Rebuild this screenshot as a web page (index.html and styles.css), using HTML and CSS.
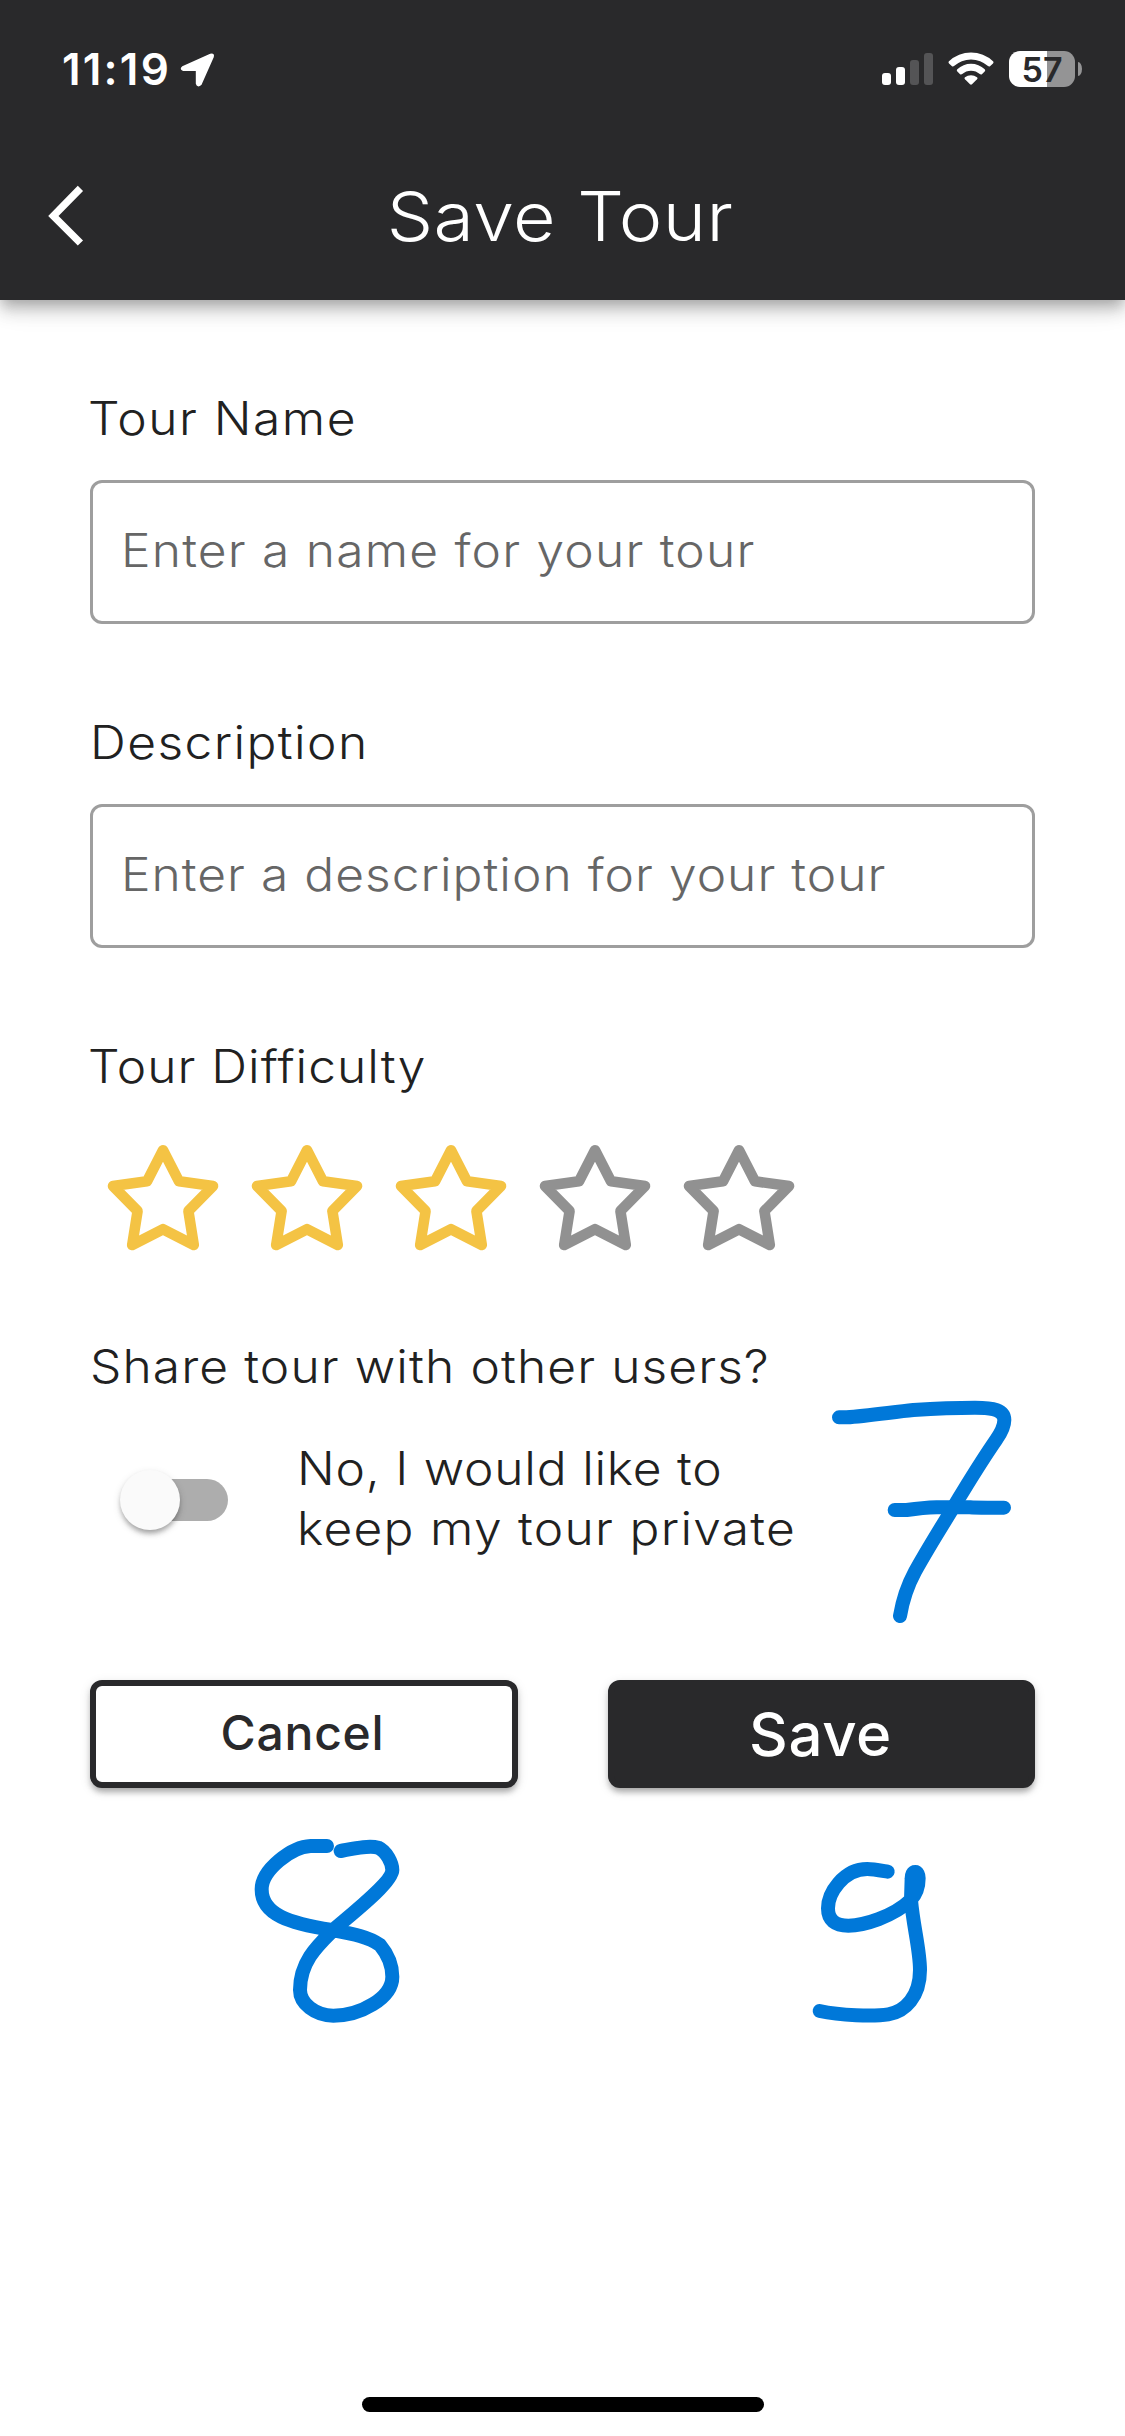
FILE: index.html
```html
<!DOCTYPE html>
<html lang="en">
<head>
<meta charset="utf-8">
<title>Save Tour</title>
<link rel="stylesheet" href="styles.css">
</head>
<body>
<div class="screen">
  <header class="header">
    <div class="status">
      <span class="time">11:19</span>
      <svg class="location" width="36" height="36" viewBox="0 0 36 36"><path d="M2.6 15 L30.5 2.6 Q34 1.6 33 5 L20.8 32.4 Q17.5 35.2 16.6 31.5 V18.3 H3.3 Q.2 17.2 2.6 15Z" fill="#fff" stroke="#fff" stroke-width="1.6" stroke-linejoin="round"/></svg>
      <div class="indicators">
        <div class="signal"><i class="bar b1"></i><i class="bar b2"></i><i class="bar b3 dim"></i><i class="bar b4 dim"></i></div>
        <svg class="wifi" width="46" height="33" viewBox="0 0 46 33" fill="#fff"><path d="M1 9.2 A32 32 0 0 1 45 9.2 Q46 10.3 45 11.4 L42 14.2 Q41 15 40 14.1 A25 25 0 0 0 6 14.1 Q5 15 4 14.2 L1 11.4 Q0 10.3 1 9.2Z"/><path d="M9.3 17.2 A20 20 0 0 1 36.7 17.2 Q37.8 18.3 36.7 19.4 L33.9 22.2 Q32.9 23 31.8 22.1 A13 13 0 0 0 14.2 22.1 Q13.1 23 12.1 22.2 L9.3 19.4 Q8.2 18.3 9.3 17.2Z"/><path d="M17 25.3 A9.5 9.5 0 0 1 29 25.3 Q30 26.2 29 27.2 L24 32.2 Q23 33.1 22 32.2 L17 27.2 Q16 26.2 17 25.3Z"/></svg>
        <div class="battery">57</div>
        <i class="nub"></i>
      </div>
    </div>
    <div class="titlebar">
      <svg class="back" width="36" height="62" viewBox="0 0 36 62"><path d="M32.4 3.4 L5.4 31 L32.4 58" fill="none" stroke="#fff" stroke-width="7.4"/></svg>
      <h1 class="title">Save Tour</h1>
    </div>
  </header>

  <main class="form">
    <label class="label"><span class="text t-name">Tour Name</span></label>
    <div class="field"><span class="text p-name">Enter a name for your tour</span></div>

    <label class="label next"><span class="text t-desc">Description</span></label>
    <div class="field"><span class="text p-desc">Enter a description for your tour</span></div>

    <label class="label next"><span class="text t-diff">Tour Difficulty</span></label>
    <div class="stars">
      <svg class="star on" viewBox="0 0 144 144"><path d="M72 22.2 L88 53.3 L122 58 L97.4 83 L102.8 117 L72 101.2 L41.2 117 L46.6 83 L22 58 L56 53.3Z"/></svg>
      <svg class="star on" viewBox="0 0 144 144"><path d="M72 22.2 L88 53.3 L122 58 L97.4 83 L102.8 117 L72 101.2 L41.2 117 L46.6 83 L22 58 L56 53.3Z"/></svg>
      <svg class="star on" viewBox="0 0 144 144"><path d="M72 22.2 L88 53.3 L122 58 L97.4 83 L102.8 117 L72 101.2 L41.2 117 L46.6 83 L22 58 L56 53.3Z"/></svg>
      <svg class="star" viewBox="0 0 144 144"><path d="M72 22.2 L88 53.3 L122 58 L97.4 83 L102.8 117 L72 101.2 L41.2 117 L46.6 83 L22 58 L56 53.3Z"/></svg>
      <svg class="star" viewBox="0 0 144 144"><path d="M72 22.2 L88 53.3 L122 58 L97.4 83 L102.8 117 L72 101.2 L41.2 117 L46.6 83 L22 58 L56 53.3Z"/></svg>
    </div>

    <label class="label share"><span class="text t-share">Share tour with other users?</span></label>
    <div class="privacy">
      <div class="switch"><i class="thumb"></i></div>
      <p class="choice"><span class="text c1">No, I would like to</span><span class="text c2">keep my tour private</span></p>
    </div>

    <div class="actions">
      <button class="btn cancel">Cancel</button>
      <button class="btn save">Save</button>
    </div>
  </main>

  <div class="home"></div>

  <!-- Pen marks drawn over the form -->
  <svg class="ink" viewBox="0 0 1125 2436">
    <g transform="translate(800 1380) scale(.33333)"><path d="M117 112 H140 C200 108 280 96 340 90 C400 86 480 83 525 83 C580 83 613 90 613 120 C613 140 600 163 588 180 C545 242 510 300 478 352 C435 425 392 490 345 575 C325 612 308 660 300 708"/><path d="M284 390 H320 C350 386 380 383 410 382 H510 C530 384 580 383 612 383"/></g>
    <g transform="translate(70 1660) scale(.33333)"><path d="M771 558 H722 C665 560 575 630 575 688 C575 765 660 790 785 810 C850 822 895 830 930 855 C955 885 967 915 967 950 C967 1015 870 1067 790 1067 C735 1067 690 1030 690 990 C690 900 750 850 795 805 C860 750 967 665 967 630 C967 610 950 575 925 563 C895 555 850 566 812 573"/></g>
    <g transform="translate(580 1660) scale(.33333)"><path d="M923 635 C905 632 880 627 862 627 C790 627 744 700 744 745 C744 780 765 797 805 797 C850 797 940 770 992 720 C1012 700 1016 675 1016 655 C1016 645 1012 636 1006 636 C998 636 995 645 995 655 L993 720 C1000 800 1020 870 1020 930 C1020 1010 975 1055 925 1063 C880 1070 780 1066 719 1053"/></g>
  </svg>
</div>
</body>
</html>
```
FILE: styles.css
```css
* { box-sizing: border-box; }
body { margin: 0; background: #fff; font-family: Inter, "Open Sans", sans-serif; font-weight: 300; color: #212121; }
.screen { position: relative; width: 1125px; height: 2436px; display: flex; flex-direction: column; overflow: hidden; }
.header { height: 300px; flex: none; background: #29292b; color: #fff; box-shadow: 0 6px 12px -3px rgba(0,0,0,.2), 0 12px 15px rgba(0,0,0,.14), 0 3px 30px rgba(0,0,0,.12); }

.status { height: 132px; display: flex; align-items: flex-start; padding: 0 43px 0 62px; }
.time { margin-top: 42px; width: 118px; font-size: 44px; line-height: 54px; font-weight: 600; letter-spacing: 2.2px; white-space: nowrap; }
.location { margin-top: 52px; }
.indicators { margin-left: auto; display: flex; align-items: flex-start; }
.signal { height: 85px; display: flex; align-items: flex-end; gap: 5px; margin-right: 15px; }
.bar { width: 9px; border-radius: 3px; background: #fff; }
.b1 { height: 12px; }
.b2 { height: 18px; }
.b3 { height: 25px; }
.b4 { height: 32px; }
.dim { background: #545456; }
.wifi { margin: 52px 15px 0 0; }
.battery { margin-top: 51px; width: 66px; height: 36px; border-radius: 11px; background: linear-gradient(90deg, #fff 38px, #949495 38px); color: #29292b; font-size: 34px; font-weight: 600; line-height: 37px; text-align: center; }
.nub { margin: 62px 0 0 3px; width: 4px; height: 14px; border-radius: 0 4px 4px 0 / 0 7px 7px 0; background: #949495; }

.titlebar { height: 168px; display: flex; align-items: flex-start; padding-left: 48px; }
.back { margin-top: 53px; }
.title { margin: 42px 0 0 -4px; width: 960px; text-align: center; font-size: 68px; line-height: 84px; font-weight: 300; letter-spacing: .45px; transform: scaleX(1.08); }

.form { padding: 88px 90px 0; }
.text { display: inline-block; transform: scaleX(1.08); transform-origin: 0 50%; white-space: nowrap; }
.label { display: block; height: 60px; font-size: 46px; line-height: 60px; }
.next { margin-top: 88px; }
.field { margin-top: 32px; height: 144px; border: 3px solid #9e9e9e; border-radius: 12px; padding-left: 28px; font-size: 46px; line-height: 134px; color: #666; }
.t-name, .t-diff { margin-left: -2px; }
.t-name { letter-spacing: 1.4px; }
.p-name { letter-spacing: 1.12px; }
.t-desc { letter-spacing: 1.32px; }
.p-desc { letter-spacing: .95px; }
.t-diff { letter-spacing: .95px; }
.t-share { letter-spacing: 1.02px; }
.c1 { letter-spacing: .71px; }
.c2 { letter-spacing: 1.2px; }

.stars { margin: 32px 0 0 1px; height: 144px; display: flex; }
.star { width: 144px; height: 144px; fill: none; stroke: #919191; stroke-width: 10.6; stroke-linejoin: round; }
.star.on { stroke: #f4c344; }

.share { margin-top: 64px; }
.privacy { margin-top: 42px; height: 120px; display: flex; align-items: center; }
.switch { margin: 4px 0 0 39px; width: 99px; height: 42px; border-radius: 21px; background: #adadad; display: flex; align-items: center; }
.thumb { flex: none; width: 60px; height: 60px; margin-left: -9px; border-radius: 50%; background: #fafafa; box-shadow: 0 6px 6px -3px rgba(0,0,0,.2), 0 3px 4px rgba(0,0,0,.14), 0 3px 9px rgba(0,0,0,.12); }
.choice { margin: 0 0 0 69px; display: flex; flex-direction: column; font-size: 46px; line-height: 60px; }

.actions { margin-top: 122px; display: flex; gap: 90px; }
.btn { flex: 1; height: 108px; padding: 0; border: 6px solid #29292b; border-radius: 12px; font-family: inherit; font-weight: 500; box-shadow: 0 6px 6px -3px rgba(0,0,0,.2), 0 4px 6px rgba(0,0,0,.14), 0 3px 12px rgba(0,0,0,.1); }
.cancel { background: #fff; color: #29292b; font-size: 48px; line-height: 94px; letter-spacing: .75px; padding: 0 3px 2px 0; }
.save { background: #29292b; color: #fff; font-size: 60px; line-height: 92px; letter-spacing: .6px; padding-right: 2px; }

.home { width: 402px; height: 15px; border-radius: 8px; background: #000; margin: auto auto 24px 362px; }
.ink { position: absolute; left: 0; top: 0; width: 1125px; height: 2436px; fill: none; stroke: #0078d9; stroke-width: 42; stroke-linecap: round; stroke-linejoin: round; pointer-events: none; }
```
